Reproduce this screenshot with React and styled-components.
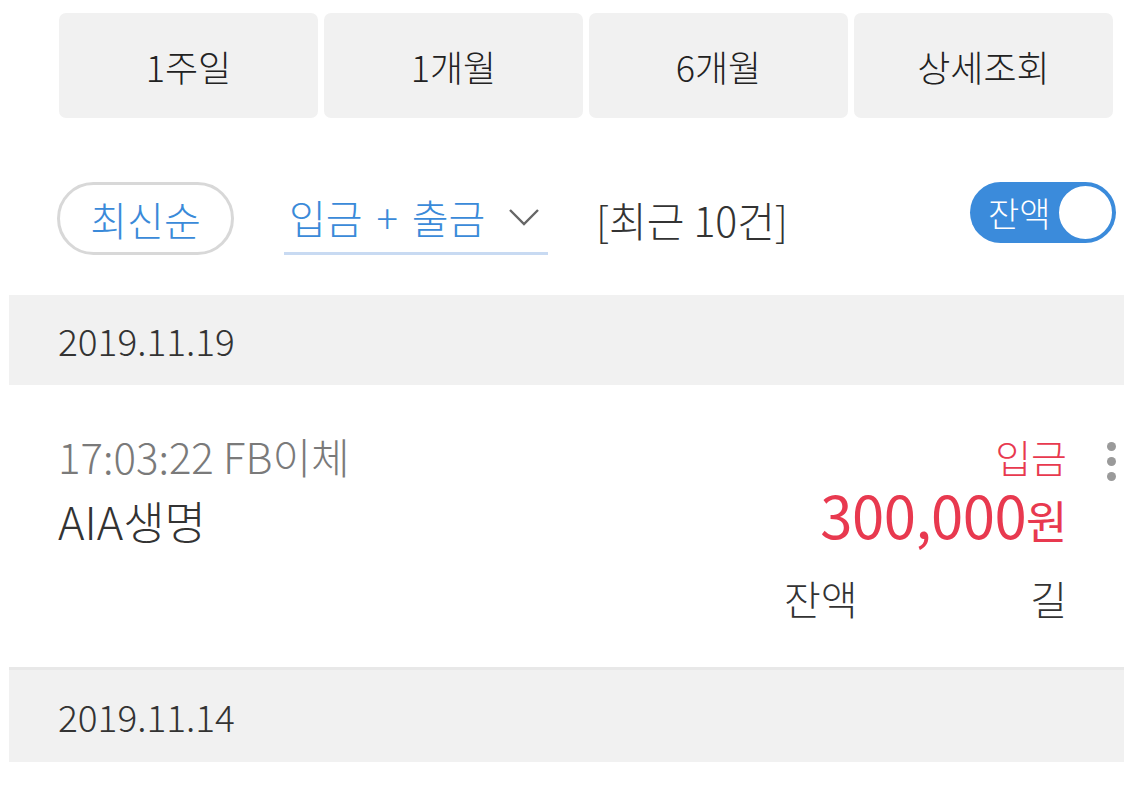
import React from "react";
import styled, { createGlobalStyle } from "styled-components";

const Global = createGlobalStyle`
  html, body { margin: 0; padding: 0; background: #fff; }
  body { font-family: "Noto Sans CJK KR", "Noto Sans", sans-serif; font-weight: 300; color: #333; }
  * { box-sizing: border-box; }
`;

const Page = styled.div`
  width: 1140px;
  height: 785px;
  overflow: hidden;
  background: #fff;
`;

const PeriodBar = styled.div`
  display: grid;
  grid-template-columns: repeat(4, 1fr);
  gap: 6px;
  padding: 13px 27px 0 59px;
`;

const PeriodButton = styled.button`
  height: 105px;
  border: none;
  border-radius: 7px;
  background: #f1f1f1;
  font-family: inherit;
  font-weight: 300;
  font-size: 36px;
  color: #222;
  padding: 0;
`;

const FilterRow = styled.div`
  display: flex;
  align-items: center;
  margin-top: 64px;
  margin-bottom: 40px;
  padding: 0 24px 0 57px;
  height: 73px;
`;

const SortPill = styled.button`
  height: 73px;
  width: 177px;
  border: 3px solid #d8d8d8;
  border-radius: 37px;
  background: #fff;
  color: #3a8ad9;
  font-family: inherit;
  font-weight: 300;
  font-size: 40px;
  padding: 0;
`;

const TypeSelect = styled.div`
  display: flex;
  align-items: center;
  justify-content: space-between;
  margin-left: 50px;
  width: 264px;
  height: 73px;
  padding: 0 8px 0 5px;
  border-bottom: 3px solid #c8daf2;
  color: #3a8ad9;
  font-size: 40px;
  word-spacing: 5px;
`;

const Count = styled.span`
  margin-left: 48px;
  font-size: 41px;
  color: #333;
`;

const Spacer = styled.div`
  flex: 1;
`;

const Toggle = styled.div`
  display: flex;
  align-items: center;
  justify-content: space-between;
  width: 146px;
  height: 61px;
  margin-top: -12px;
  border-radius: 31px;
  background: #3b8bdb;
  padding: 0 2px 0 18px;
  color: #fff;
  font-size: 34px;
`;

const Knob = styled.span`
  width: 57px;
  height: 57px;
  border-radius: 50%;
  background: #fff;
  border: 2px solid #3b8bdb;
`;

const DateBand = styled.div`
  display: flex;
  align-items: center;
  height: ${p => p.$h || 90}px;
  margin: 0 16px 0 9px;
  padding-left: 49px;
  background: #f1f1f1;
  font-size: 37px;
  color: #333;
  border-top: ${p => (p.$line ? "3px solid #e8e8e8" : "none")};
`;

const TxRow = styled.div`
  display: flex;
  justify-content: space-between;
  height: 282px;
  margin: 0 16px 0 9px;
  padding: 46px 0 0 49px;
`;

const TxLeft = styled.div`
  display: flex;
  flex-direction: column;
`;

const TxMeta = styled.span`
  font-size: 42px;
  line-height: 50px;
  color: #7a7a7a;
`;

const TxName = styled.span`
  margin-top: 13px;
  font-size: 45px;
  line-height: 54px;
  color: #333;
`;

const TxRight = styled.div`
  display: flex;
  align-items: flex-start;
`;

const Amounts = styled.div`
  display: flex;
  flex-direction: column;
  align-items: flex-end;
`;

const TxType = styled.span`
  font-size: 39px;
  line-height: 50px;
  color: #e8394f;
`;

const TxAmount = styled.span`
  margin-top: 2px;
  font-size: 58px;
  line-height: 62px;
  font-weight: 400;
  color: #e8394f;
  letter-spacing: -0.5px;
`;

const Won = styled.span`
  font-size: 45px;
`;

const Balance = styled.div`
  display: flex;
  justify-content: space-between;
  width: 283px;
  margin-top: 22px;
  font-size: 40px;
  line-height: 50px;
  color: #333;
`;

const MoreButton = styled.div`
  display: flex;
  flex-direction: column;
  gap: 6px;
  margin: 11px 8px 0 40px;
`;

const Dot = styled.span`
  width: 9px;
  height: 9px;
  border-radius: 50%;
  background: #9a9a9a;
`;

const Chevron = () => (
  <svg width="32" height="20" viewBox="0 0 32 20">
    <path d="M2 3 L16 17 L30 3" fill="none" stroke="#666" strokeWidth="2.4" />
  </svg>
);

export default function App() {
  return (
    <Page>
      <Global />
      <PeriodBar>
        <PeriodButton>1주일</PeriodButton>
        <PeriodButton>1개월</PeriodButton>
        <PeriodButton>6개월</PeriodButton>
        <PeriodButton>상세조회</PeriodButton>
      </PeriodBar>
      <FilterRow>
        <SortPill>최신순</SortPill>
        <TypeSelect>
          <span>입금 + 출금</span>
          <Chevron />
        </TypeSelect>
        <Count>[최근 10건]</Count>
        <Spacer />
        <Toggle>
          <span>잔액</span>
          <Knob />
        </Toggle>
      </FilterRow>
      <DateBand>2019.11.19</DateBand>
      <TxRow>
        <TxLeft>
          <TxMeta>17:03:22 FB이체</TxMeta>
          <TxName>AIA생명</TxName>
        </TxLeft>
        <TxRight>
          <Amounts>
            <TxType>입금</TxType>
            <TxAmount>
              300,000<Won>원</Won>
            </TxAmount>
            <Balance>
              <span>잔액</span>
              <span>길</span>
            </Balance>
          </Amounts>
          <MoreButton>
            <Dot />
            <Dot />
            <Dot />
          </MoreButton>
        </TxRight>
      </TxRow>
      <DateBand $line $h={95}>2019.11.14</DateBand>
    </Page>
  );
}
